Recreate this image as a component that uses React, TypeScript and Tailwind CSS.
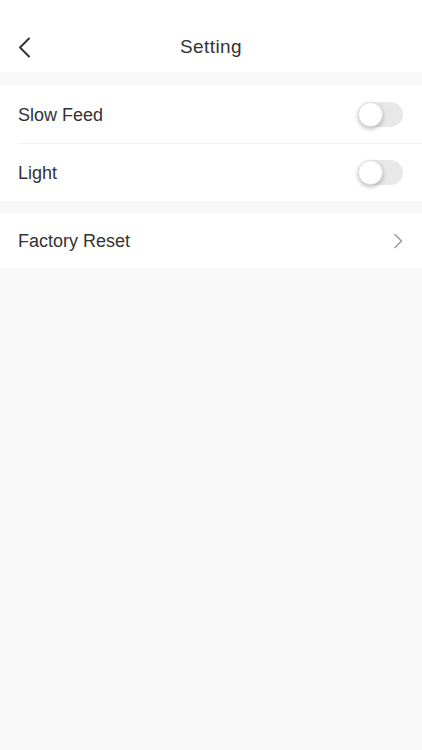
import React from "react";

function Toggle() {
  return (
    <div className="relative w-[45px] h-[25px] rounded-full bg-[#e8e8e8]">
      <div className="absolute left-0 top-0 w-[25px] h-[25px] rounded-full bg-white shadow-[0_2px_4px_rgba(0,0,0,0.25)] border border-[#e0e0e0]" />
    </div>
  );
}

export default function App() {
  const font = { fontFamily: '"Liberation Sans", Arial, sans-serif' };
  return (
    <div className="w-[422px] h-[750px] bg-[#f8f8f8] text-[#333333]" style={font}>
      <div className="bg-white pt-[22px]">
        <div className="relative h-[50px] flex items-center justify-center">
          <svg
            className="absolute left-[17px] top-[15px]"
            width="14"
            height="21"
            viewBox="0 0 14 21"
            fill="none"
          >
            <path d="M12 1.5 L3 10.5 L12 19.5" stroke="#333" strokeWidth="2" strokeLinecap="round" strokeLinejoin="round" />
          </svg>
          <span className="text-[19px] tracking-[0.4px]">Setting</span>
        </div>
      </div>
      <div className="h-[13px]" />
      <div className="bg-white">
        <div className="h-[58px] flex items-center justify-between pl-[18px] pr-[19px]">
          <span className="text-[18px] pt-[3px]">Slow Feed</span>
          <Toggle />
        </div>
        <div className="ml-[18px] h-px bg-[#f0f0f0]" />
        <div className="h-[57px] flex items-center justify-between pl-[18px] pr-[19px]">
          <span className="text-[18px] pt-[2px]">Light</span>
          <Toggle />
        </div>
      </div>
      <div className="h-[13px]" />
      <div className="bg-white">
        <div className="h-[54px] flex items-center justify-between pl-[18px] pr-[19px]">
          <span className="text-[18px]">Factory Reset</span>
          <svg width="10" height="16" viewBox="0 0 10 16" fill="none">
            <path d="M2 1.5 L8.5 8 L2 14.5" stroke="#9a9a9a" strokeWidth="1.5" strokeLinecap="round" strokeLinejoin="round" />
          </svg>
        </div>
      </div>
    </div>
  );
}
